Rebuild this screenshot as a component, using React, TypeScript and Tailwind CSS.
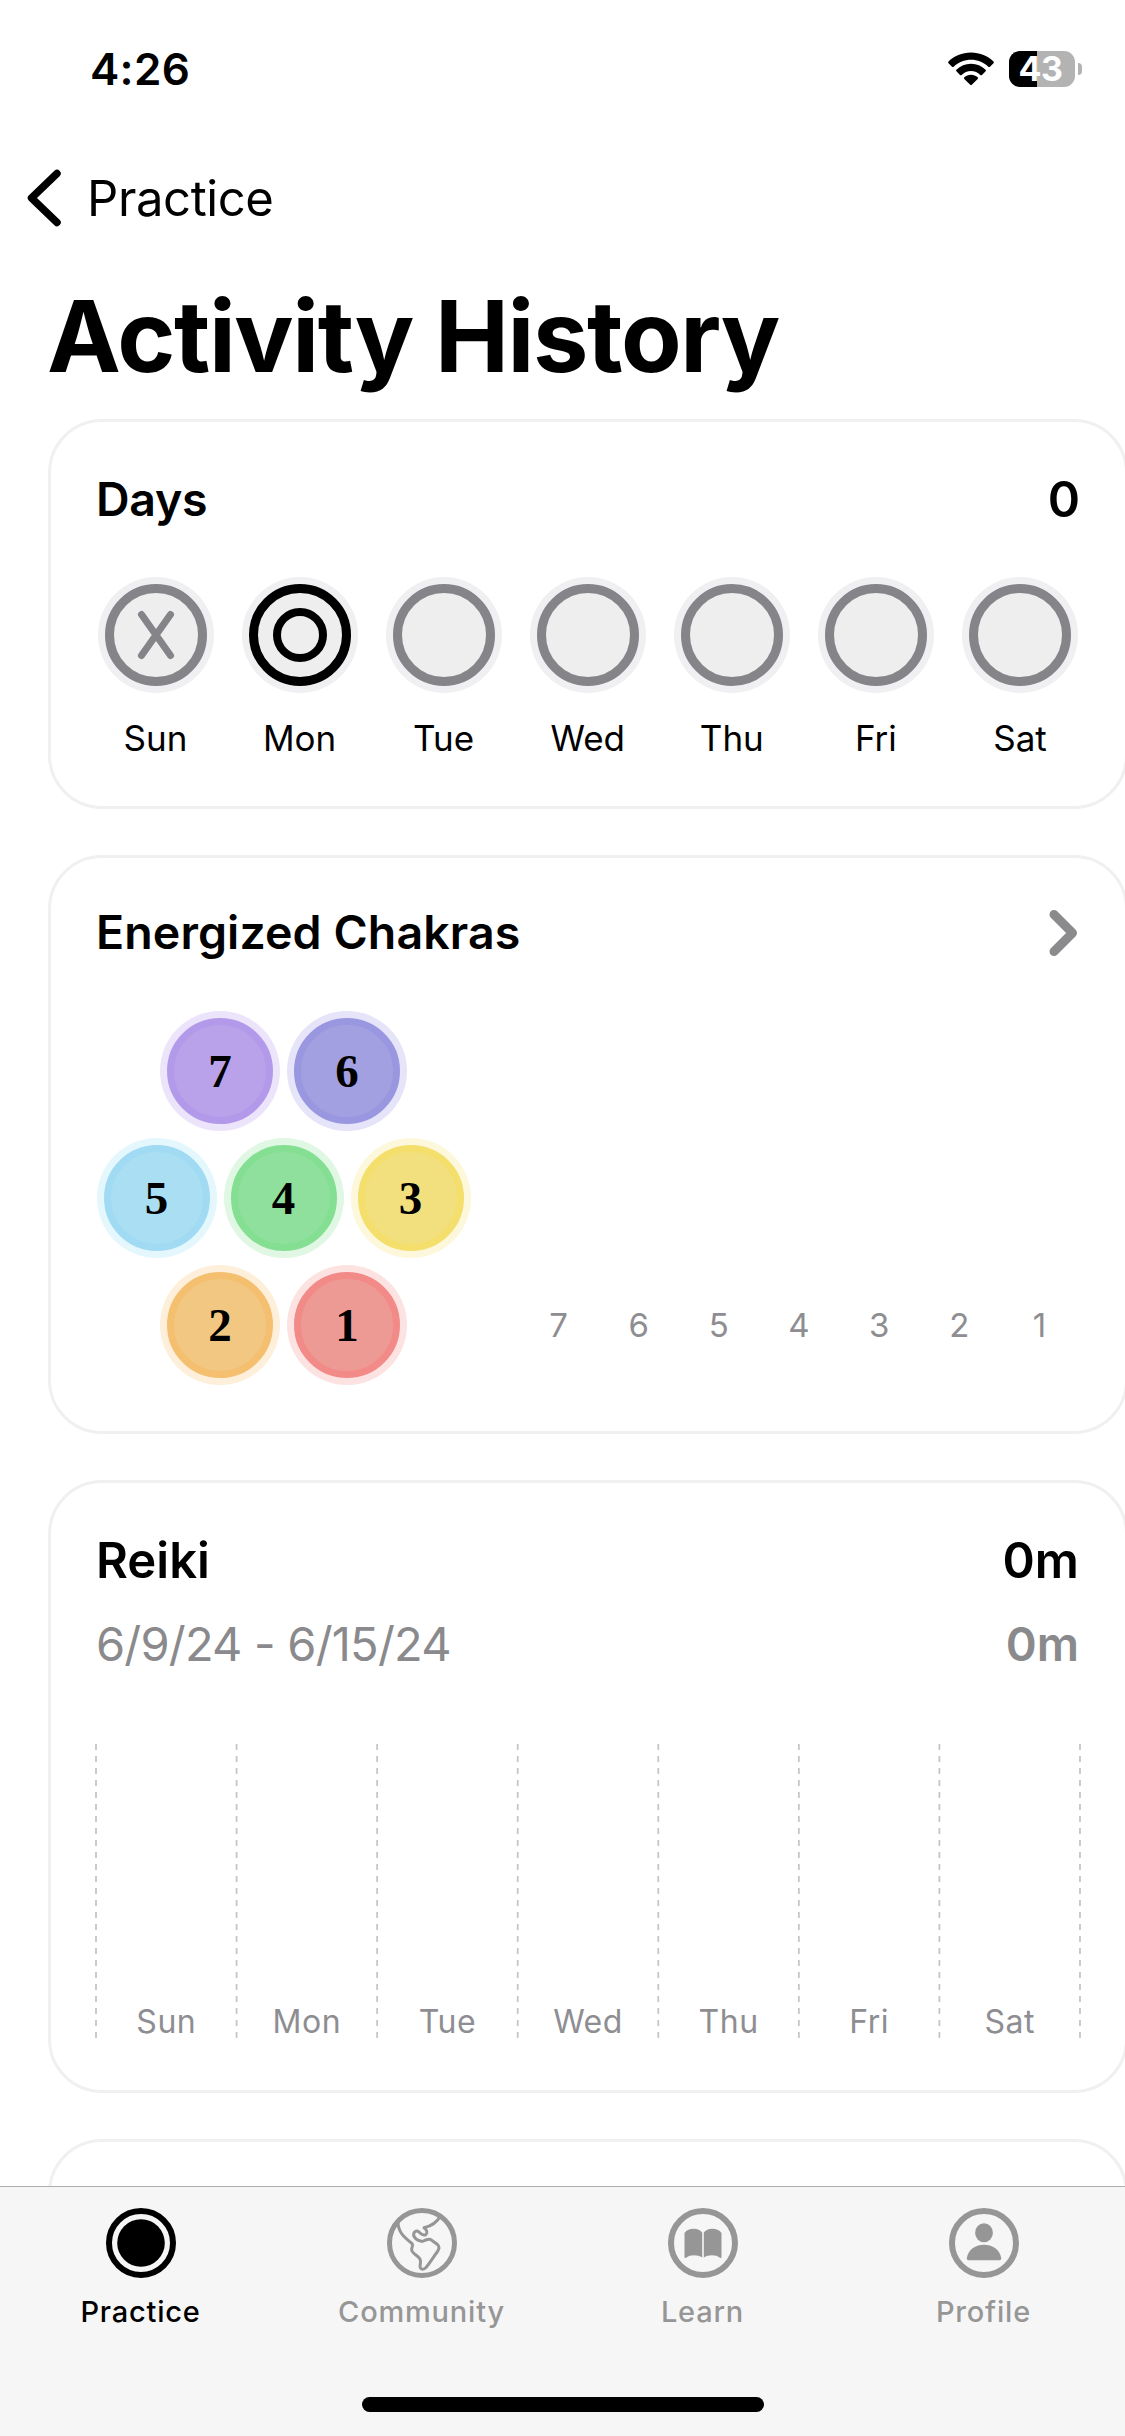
import React from 'react';

const days = ['Sun', 'Mon', 'Tue', 'Wed', 'Thu', 'Fri', 'Sat'];

type Chakra = { n: number; halo: string; core: string };

const chakraRows: Chakra[][] = [
  [
    { n: 7, halo: 'bg-[#ece4fa]', core: 'bg-[#b9a2ea] border-[#b399ea]' },
    { n: 6, halo: 'bg-[#e5e4f8]', core: 'bg-[#a3a0e1] border-[#9a97e1]' },
  ],
  [
    { n: 5, halo: 'bg-[#e4f7fd]', core: 'bg-[#aadef3] border-[#a0dbf3]' },
    { n: 4, halo: 'bg-[#dff7e3]', core: 'bg-[#8fe09c] border-[#84df92]' },
    { n: 3, halo: 'bg-[#fdf8dc]', core: 'bg-[#f2e07e] border-[#f4de6c]' },
  ],
  [
    { n: 2, halo: 'bg-[#fdefda]', core: 'bg-[#f1c781] border-[#f4bf6f]' },
    { n: 1, halo: 'bg-[#fde2e2]', core: 'bg-[#ee9a94] border-[#f28b87]' },
  ],
];

function Card({ className, children }: { className: string; children?: React.ReactNode }) {
  return (
    <section className={`w-[1080px] shrink-0 rounded-[54px] border-[3px] border-[#f0f0f0] pr-[46px] pl-[45px] ${className}`}>
      {children}
    </section>
  );
}

function DayCircle({ index }: { index: number }) {
  const color = index === 1 ? '#000000' : '#858589';
  return (
    <svg className="size-[116px]" viewBox="0 0 116 116" fill="none">
      <circle cx="58" cy="58" r="58" fill="#f0f0f2" />
      <circle cx="58" cy="58" r="46.5" fill="#eeeeef" stroke={color} strokeWidth="9" />
      {index === 0 && (
        <path d="M43.5 37.5 72.5 78.500M72.500 37.5 43.5 78.500" stroke={color} strokeWidth="7" strokeLinecap="round" />
      )}
      {index === 1 && <circle cx="58" cy="58" r="23" stroke={color} strokeWidth="8" />}
    </svg>
  );
}

function DaysCard() {
  return (
    <Card className="h-[390px]">
      <div className="flex h-[155px] items-center justify-between font-semibold">
        <h2 className="text-[46.5px] tracking-[-0.3px]">Days</h2>
        <span className="-mr-px text-[49px]">0</span>
      </div>
      <div className="mr-px ml-[1.5px] flex justify-between">
        {days.map((day, i) => (
          <div key={day} className="flex w-[116px] flex-col items-center gap-[23px]">
            <DayCircle index={i} />
            <span className="text-[35px] leading-[44px]">{day}</span>
          </div>
        ))}
      </div>
    </Card>
  );
}

function ChakrasCard() {
  return (
    <Card className="h-[579px]">
      <div className="flex h-[150px] items-center justify-between">
        <h2 className="text-[46.5px] font-semibold tracking-[0.1px]">Energized Chakras</h2>
        <svg className="h-[48px] w-[32px]" viewBox="0 0 32 48" fill="none" stroke="#8b8b8d" strokeWidth="9" strokeLinecap="round" strokeLinejoin="round">
          <path d="M7 5.500 25.500 24 7 42.500" />
        </svg>
      </div>
      <div className="mt-[3px] flex items-end justify-between">
        <div className="ml-[0.5px] flex w-[374px] flex-col items-center gap-[7px]">
          {chakraRows.map((row, i) => (
            <div key={i} className="flex gap-[7px]">
              {row.map(({ n, halo, core }) => (
                <div key={n} className={`flex size-[120px] items-center justify-center rounded-full ${halo}`}>
                  <div
                    className={`flex size-[106px] items-center justify-center rounded-full border-[7px] font-['Liberation_Serif',serif] text-[47px] leading-none font-bold ${core}`}
                  >
                    {n}
                  </div>
                </div>
              ))}
            </div>
          ))}
        </div>
        <div className="-mr-[0.5px] grid h-[118px] w-[561px] grid-cols-7 items-center text-center text-[33px] text-[#8e8e92]">
          {[7, 6, 5, 4, 3, 2, 1].map((n) => (
            <span key={n}>{n}</span>
          ))}
        </div>
      </div>
    </Card>
  );
}

function ReikiCard() {
  return (
    <Card className="h-[613px]">
      <div className="mt-[38px] flex h-[80px] items-center justify-between text-[49px] font-semibold">
        <h2>Reiki</h2>
        <span>0m</span>
      </div>
      <div className="flex h-[86px] items-center justify-between text-[47px] text-[#8a8a8d]">
        <span className="tracking-[-0.8px]">6/9/24 - 6/15/24</span>
        <span className="font-semibold">0m</span>
      </div>
      <div className="relative -mr-px mt-[57px] flex h-[294px] items-end">
        <svg className="absolute inset-0 size-full overflow-visible" viewBox="0 0 984 294" preserveAspectRatio="none" stroke="#c6c6c8" strokeWidth="1.8" strokeDasharray="6 6">
          {[0, 1, 2, 3, 4, 5, 6, 7].map((i) => (
            <path key={i} d={`M${i * 140.57} 0V294`} />
          ))}
        </svg>
        <div className="grid w-full grid-cols-7 text-center text-[32px] leading-[32px] tracking-[0.5px] text-[#8e8e92]">
          {days.map((day) => (
            <span key={day}>{day}</span>
          ))}
        </div>
      </div>
    </Card>
  );
}

function PracticeIcon() {
  return (
    <svg className="size-[70px]" viewBox="0 0 70 70" fill="none">
      <circle cx="35" cy="35" r="32" stroke="currentColor" strokeWidth="6" />
      <circle cx="35" cy="35" r="23.8" fill="currentColor" />
    </svg>
  );
}

function CommunityIcon() {
  return (
    <svg className="size-[70px]" viewBox="0 0 70 70" fill="none" stroke="currentColor" strokeLinejoin="round">
      <circle cx="35" cy="35" r="32.500" strokeWidth="5" />
      <path
        strokeWidth="3"
        d="M11 14C11 24 17 29 25 35.500C26.500 37.500 24.500 39 24.700 42C25 45.500 31 47.500 33 51C34.500 54 32.500 57 33.200 59.500C34.200 62 37 61.500 39 59.500C43.500 54 46 49.500 50.500 43.500C52.500 40.500 52.500 38.500 50.500 36.500L44 31.800C42.500 30.800 41 31.500 39.500 31.700C36.500 32.500 36.500 33.800 34.500 33.300C31 32.500 27.500 30.500 26.700 27.500C26.200 23.500 29.500 22 32 24C34.500 26.500 37 28 39 26.500C41 24.500 39.500 21.500 37 19.800C44 18 50 14.500 53 8.500"
      />
    </svg>
  );
}

function LearnIcon() {
  return (
    <svg className="size-[70px]" viewBox="0 0 70 70" fill="none">
      <circle cx="35" cy="35" r="32" stroke="currentColor" strokeWidth="6" />
      <path
        fill="currentColor"
        d="M16.500 25C18.500 22 22 20.700 25.500 20.700C29.500 20.700 32.500 22 34.200 24.500V49.500C30 46.500 22 46.300 18 49.700C17 50.300 16.500 50 16.500 49ZM53.500 25C51.500 22 48 20.700 44.500 20.700C40.500 20.700 37.500 22 35.800 24.500V49.500C40 46.500 48 46.300 52 49.700C53 50.300 53.500 50 53.500 49Z"
      />
    </svg>
  );
}

function ProfileIcon() {
  return (
    <svg className="size-[70px]" viewBox="0 0 70 70" fill="none">
      <circle cx="35" cy="35" r="32" stroke="currentColor" strokeWidth="6" />
      <ellipse cx="35" cy="24.800" rx="8.900" ry="9.500" fill="currentColor" />
      <path fill="currentColor" d="M35 36.700C44.500 36.700 51 42.500 52.200 50C52.300 51.500 51.500 52.300 50 52.300H20C18.500 52.300 17.700 51.500 17.800 50C19 42.500 25.500 36.700 35 36.700Z" />
    </svg>
  );
}

const tabs = [
  { label: 'Practice', Icon: PracticeIcon, tone: 'text-black' },
  { label: 'Community', Icon: CommunityIcon, tone: 'text-[#969696]' },
  { label: 'Learn', Icon: LearnIcon, tone: 'text-[#969696]' },
  { label: 'Profile', Icon: ProfileIcon, tone: 'text-[#969696]' },
];

function StatusBar() {
  return (
    <div className="flex h-[138px] shrink-0 items-center justify-between pr-[43px] pl-[90px]">
      <span className="text-[44px] font-semibold tracking-[0.3px]">4:26</span>
      <div className="flex items-center">
        <svg className="h-[34px] w-[46px]" viewBox="0 0 46 34" fill="currentColor">
          <path d="M23 0.500C32 0.500 40 4 45.500 9.500C46 10.100 46 10.700 45.500 11.200L42 14.700C41.500 15.200 40.800 15.200 40.300 14.700C35.500 10.300 29.500 7.800 23 7.800C16.500 7.800 10.500 10.300 5.700 14.700C5.200 15.200 4.500 15.200 4 14.700L0.500 11.200C0 10.700 0 10.100 0.500 9.500C6 4 14 0.500 23 0.500Z" />
          <path d="M23 11.700C28.700 11.700 33.700 14 37.600 17.700C38.100 18.200 38.100 18.800 37.600 19.300L34 22.900C33.500 23.400 32.900 23.400 32.300 22.900C29.800 20.500 26.600 19 23 19C19.400 19 16.200 20.500 13.700 22.900C13.100 23.400 12.500 23.400 12 22.900L8.400 19.300C7.900 18.800 7.900 18.200 8.400 17.700C12.300 14 17.300 11.700 23 11.700Z" />
          <path d="M23 22.700C25.600 22.700 27.900 23.700 29.700 25.300C30.200 25.800 30.200 26.400 29.700 26.900L23.800 32.800C23.300 33.300 22.700 33.300 22.200 32.800L16.300 26.900C15.800 26.400 15.800 25.800 16.300 25.300C18.100 23.700 20.400 22.700 23 22.700Z" />
        </svg>
        <div className="ml-[15px] flex h-[36px] w-[66px] items-center justify-center rounded-[11px] bg-linear-to-r from-black from-[28px] to-[#b3b3b3] to-[28px] pr-[3px] text-[34px] leading-none font-bold tracking-[-0.5px] text-white">
          43
        </div>
        <div className="ml-[3px] h-[12px] w-[4px] rounded-r-full bg-[#b3b3b3]" />
      </div>
    </div>
  );
}

export default function App() {
  return (
    <div className="flex h-[2436px] w-[1125px] flex-col overflow-hidden bg-white font-['Inter',sans-serif] text-black">
      <StatusBar />
      <div className="flex h-[120px] shrink-0 items-center pl-[26px]">
        <svg className="h-[58px] w-[36px]" viewBox="0 0 36 58" fill="none" stroke="currentColor" strokeWidth="7.500" strokeLinecap="round" strokeLinejoin="round">
          <path d="M31 4.500 5.500 29 31 53.500" />
        </svg>
        <span className="ml-[25px] pt-px text-[49px] tracking-[-0.4px]">Practice</span>
      </div>
      <h1 className="flex h-[156px] shrink-0 items-center pl-[47px] text-[99px] font-bold tracking-[-1.4px]">Activity History</h1>
      <main className="flex min-h-0 flex-1 flex-col gap-[46px] overflow-hidden pt-[5px] pl-[48px]">
        <DaysCard />
        <ChakrasCard />
        <ReikiCard />
        <Card className="h-[614px]" />
      </main>
      <nav className="flex h-[250px] shrink-0 flex-col items-center border-t border-[#adadad] bg-[#f6f6f6] pt-[21px]">
        <div className="grid w-full grid-cols-4 pr-px">
          {tabs.map(({ label, Icon, tone }) => (
            <div key={label} className={`flex flex-col items-center gap-[16px] ${tone}`}>
              <Icon />
              <span className="text-[29px] leading-[36px] font-medium tracking-[0.8px]">{label}</span>
            </div>
          ))}
        </div>
        <div className="mt-[67px] h-[15px] w-[402px] rounded-full bg-black" />
      </nav>
    </div>
  );
}
